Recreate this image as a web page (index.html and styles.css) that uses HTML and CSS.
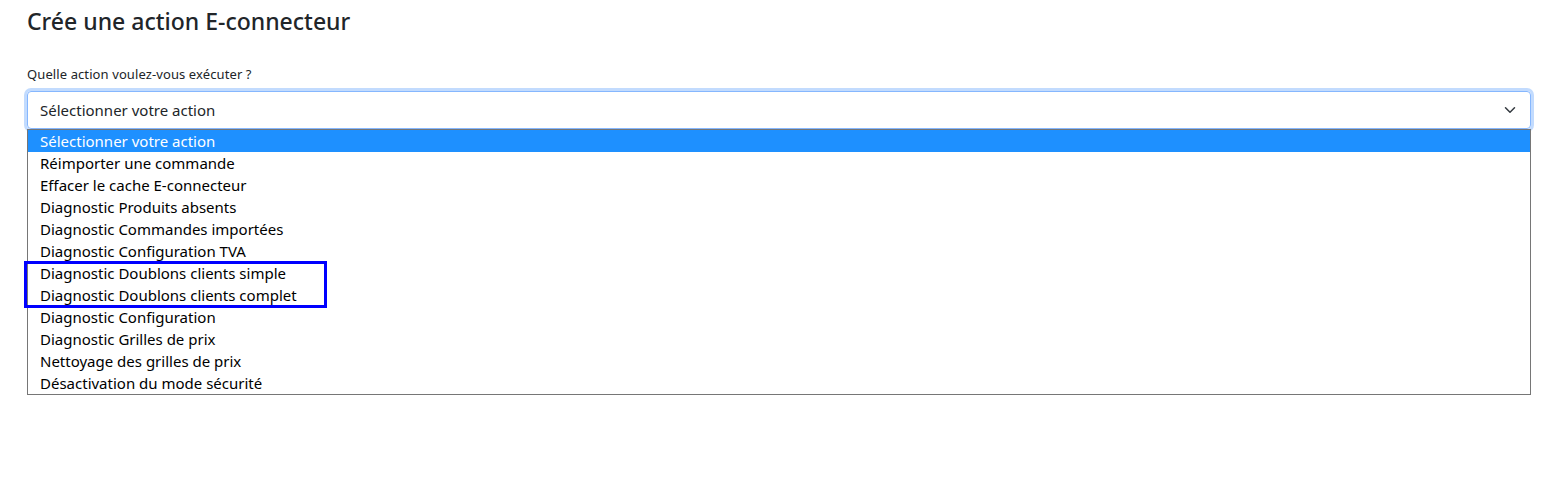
FILE: index.html
```html
<!DOCTYPE html>
<html lang="fr">

<head>
  <meta charset="UTF-8">
  <title>Crée une action E-connecteur</title>
  <link rel="stylesheet" href="styles.css">
</head>

<body>
  <div class="page">
    <h1>Crée une action E-connecteur</h1>

    <label class="form-label" for="action">Quelle action voulez-vous exécuter ?</label>
    <div class="select-wrap">
      <div class="form-select" id="action">
        <span>Sélectionner votre action</span>
        <svg class="chevron" width="12" height="12" viewBox="0 0 16 16">
          <path d="M2 5l6 6 6-6" fill="none" stroke="#343a40" stroke-width="2" stroke-linecap="round" stroke-linejoin="round" />
        </svg>
      </div>

      <ul class="options">
        <li class="selected">Sélectionner votre action</li>
        <li>Réimporter une commande</li>
        <li>Effacer le cache E-connecteur</li>
        <li>Diagnostic Produits absents</li>
        <li>Diagnostic Commandes importées</li>
        <li>Diagnostic Configuration TVA</li>
        <li>Diagnostic Doublons clients simple</li>
        <li>Diagnostic Doublons clients complet</li>
        <li>Diagnostic Configuration</li>
        <li>Diagnostic Grilles de prix</li>
        <li>Nettoyage des grilles de prix</li>
        <li>Désactivation du mode sécurité</li>
      </ul>
      <!-- annotation around the two "Doublons" entries -->
      <div class="highlight-box"></div>
    </div>
  </div>
</body>

</html>
```

FILE: styles.css
```css
body {
  margin: 0;
  padding: 0;
  font-family: 'Noto Sans', 'Open Sans', sans-serif;
  color: #212529;
  background: #fff;
}

.page {
  padding: 8px 16px 0 27px;
}

h1 {
  font-size: 23px;
  font-weight: 500;
  line-height: 1.2;
  margin: 0 0 29px;
}

.form-label {
  display: block;
  font-size: 13px;
  letter-spacing: 0.1px;
  line-height: 18px;
  margin-bottom: 8px;
}

.select-wrap {
  position: relative;
}

.form-select {
  display: flex;
  align-items: center;
  justify-content: space-between;
  height: 38px;
  box-sizing: border-box;
  padding: 0 14px 0 12px;
  border: 1px solid #86b7fe;
  border-radius: 4px;
  box-shadow: 0 0 0 3px rgba(13, 110, 253, 0.25);
  font-size: 15px;
}

.options {
  list-style: none;
  margin: 0;
  padding: 0;
  border: 1px solid #767676;
}

.options li {
  height: 22px;
  line-height: 22px;
  padding-left: 12px;
  font-size: 15px;
  color: #000;
}

.options li.selected {
  background: #1e90ff;
  color: #fff;
}

.highlight-box {
  position: absolute;
  left: -3px;
  top: 170px;
  width: 297px;
  height: 41px;
  border: 3px solid #0000ff;
}
```
